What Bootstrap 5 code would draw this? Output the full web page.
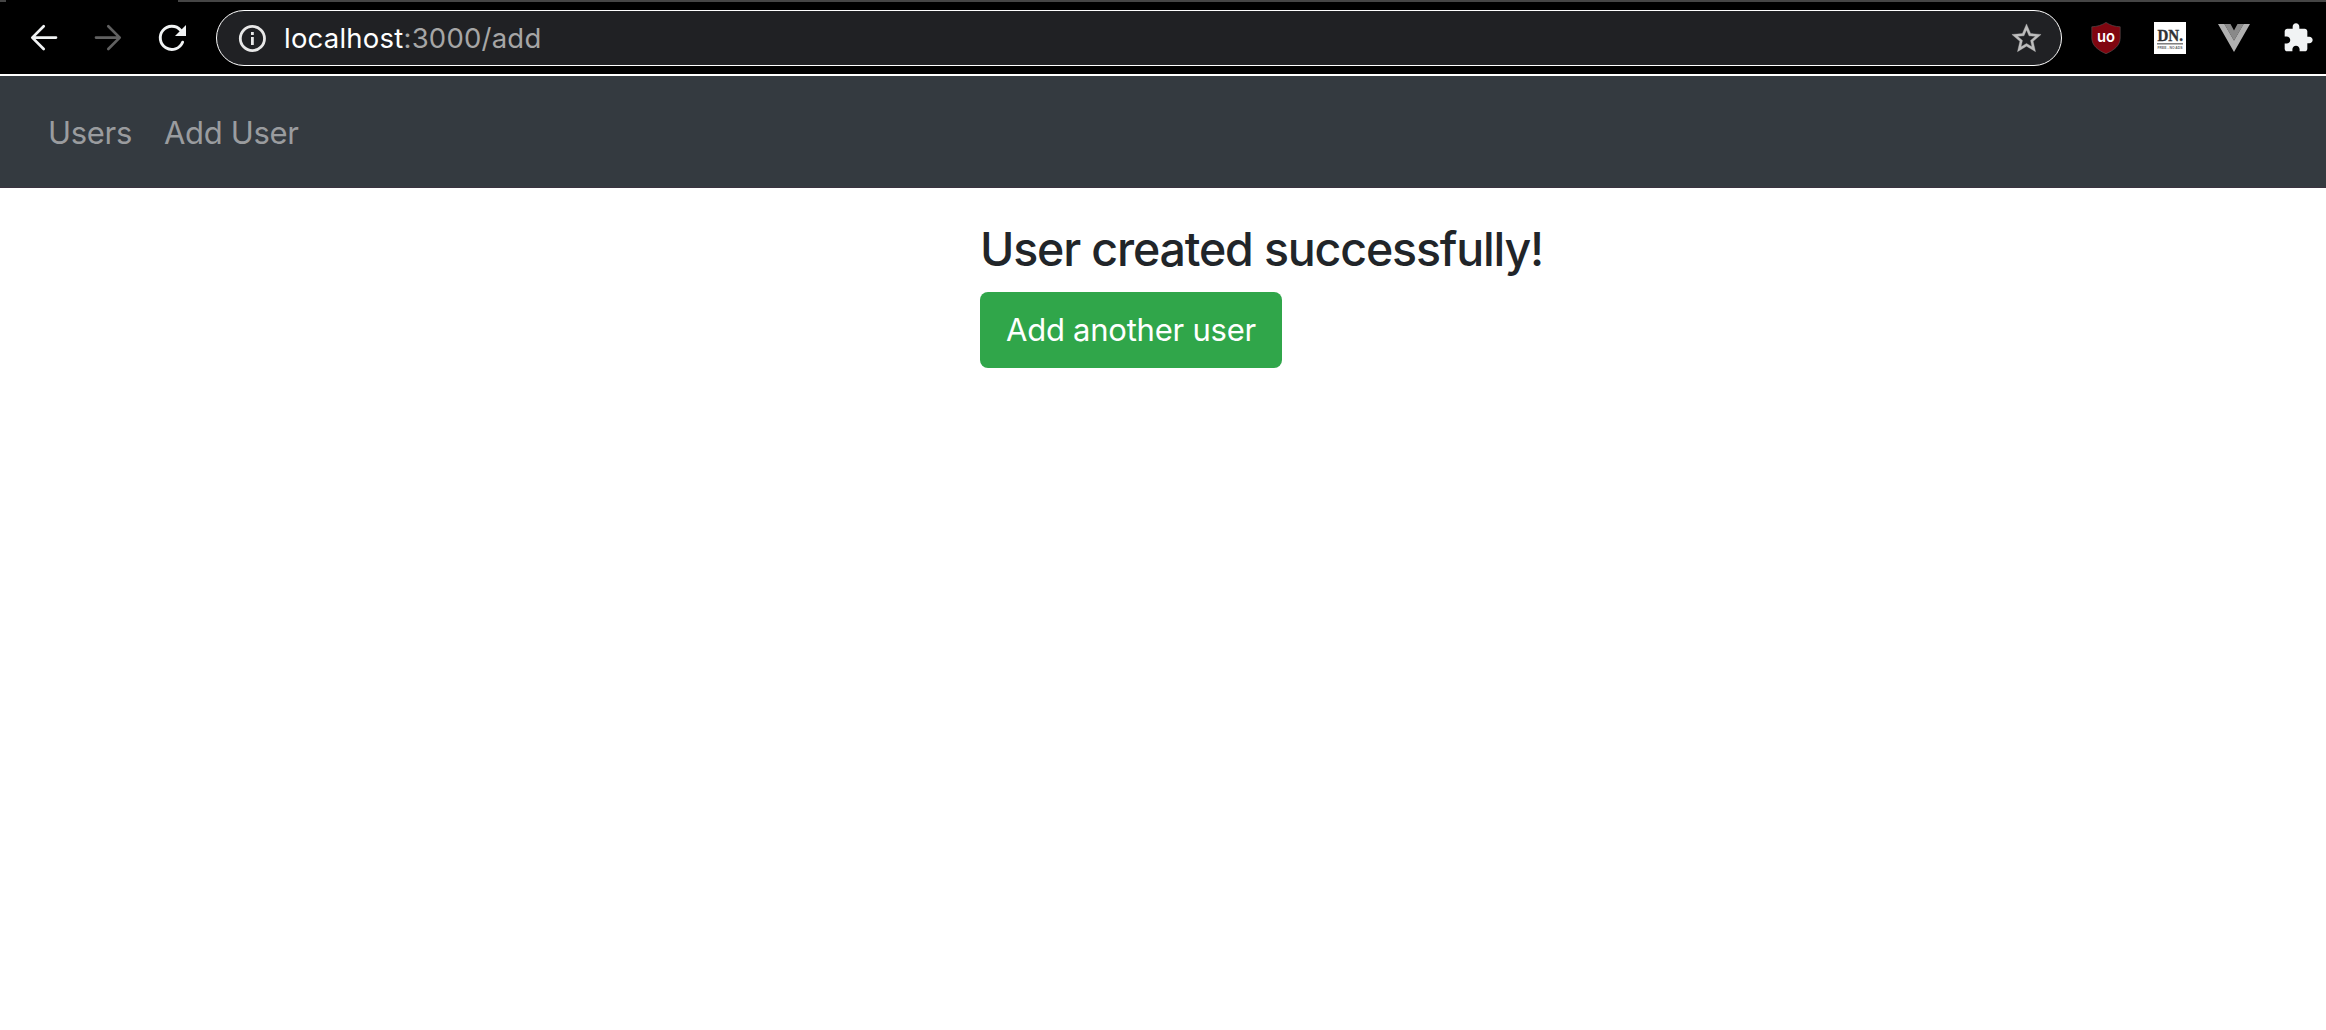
<!DOCTYPE html>
<html lang="en">
<head>
<meta charset="utf-8">
<title>Users</title>
<link href="https://cdn.jsdelivr.net/npm/bootstrap@5.3.0/dist/css/bootstrap.min.css" rel="stylesheet">
<style>
  body { font-family: Inter, "Liberation Sans", sans-serif; color: #212529; background: #fff; }
  .tabstrip { height: 2px; background: #454545; }
  .active-tab { width: 172px; height: 2px; margin-left: 6px; background: #000; }
  .toolbar { height: 72px; padding: 0 12px 0 28px; gap: 28px; background: #000; }
  .tools { gap: 32px; }
  .tools svg { width: 32px; height: 32px; display: block; overflow: visible; }
  .omnibox { height: 56px; border: 1px solid #fff; border-radius: 28px; background: #202124; padding: 0 17px 0 19px; }
  .address { font-size: 27.5px; line-height: 54px; letter-spacing: .22px; color: #a6a6a6; margin-left: 16px; white-space: nowrap; }
  .address .host { color: #fff; }
  .separator { height: 2px; background: #fff; }
  .app-nav { height: 112px; padding: 2px 32px 0; background: #343a40; border-bottom: 1px solid #3b3340; }
  .app-nav .navbar-nav .nav-link { font-size: 31px; line-height: 48px; letter-spacing: -.32px; padding: 0 16px; color: #9a9c9f; white-space: nowrap; }
  .message { padding: 32px 0 0 980px; }
  .message h4 { font-size: 46.5px; line-height: 58px; font-weight: 500; letter-spacing: -1.17px; margin: 0 0 14px; white-space: nowrap; }
  .btn-again { height: 76px; padding: 0 26px; font-size: 31px; line-height: 76px; letter-spacing: -.24px; border: 0; border-radius: 8px; background: #30a64a; color: #fff; white-space: nowrap; }
</style>
<script src="https://cdn.jsdelivr.net/npm/bootstrap@5.3.0/dist/js/bootstrap.bundle.min.js"></script>
</head>
<body>
<header>
  <div class="tabstrip"><div class="active-tab"></div></div>
  <div class="toolbar d-flex align-items-center">
    <div class="tools d-flex">
      <svg viewBox="0 0 32 32" fill="none" stroke="#f1f3f4" stroke-width="2.7" stroke-linecap="round" stroke-linejoin="round"><path d="M28 15.6H4.8M15.7 4.2L4.3 15.6L15.7 27"/></svg>
      <svg viewBox="0 0 32 32" fill="none" stroke="#616161" stroke-width="2.7" stroke-linecap="round" stroke-linejoin="round"><path d="M4 15.6H27.6M16.3 4.2L27.7 15.6L16.3 27"/></svg>
      <svg viewBox="0 0 32 32"><path d="M26.6 20.2A11.6 11.6 0 1 1 24.6 8.2" fill="none" stroke="#f1f3f4" stroke-width="2.9" stroke-linecap="round"/><path d="M30 3V14H19z" fill="#f1f3f4"/></svg>
    </div>
    <div class="omnibox d-flex align-items-center flex-grow-1">
      <svg width="32" height="32" viewBox="0 0 32 32"><circle cx="16.4" cy="16.5" r="12.1" fill="none" stroke="#e8e8e8" stroke-width="2.8"/><path d="M15 10h2.8v2.9H15zM15 15h2.8v8H15z" fill="#e8e8e8"/></svg>
      <div class="address"><span class="host">localhost</span>:3000/add</div>
      <svg class="ms-auto" width="35" height="35" viewBox="0 0 24 24" fill="#bdbdbd" stroke="#bdbdbd" stroke-width=".25"><path d="M22 9.24l-7.19-.62L12 2 9.19 8.63 2 9.24l5.46 4.73L5.82 21 12 17.27 18.18 21l-1.63-7.03L22 9.24zM12 15.4l-3.76 2.27 1-4.28-3.32-2.88 4.38-.38L12 6.1l1.71 4.04 4.38.38-3.32 2.88 1 4.28L12 15.4z"/></svg>
    </div>
    <div class="tools d-flex">
      <svg viewBox="0 0 32 32"><path d="M16 .4C12.2 3 7 4.6 1.8 4.8V16c0 7.500 6.500 12.500 14.200 15.700C23.700 28.500 30.200 23.500 30.200 16V4.800C25 4.600 19.800 3 16 .4z" fill="#800610" stroke="#555" stroke-width=".6"/><text x="6.900" y="19.500" font-family="Inter, sans-serif" font-size="16.500" font-weight="600" textLength="18" lengthAdjust="spacingAndGlyphs" fill="#fff">uo</text></svg>
      <svg viewBox="0 0 32 32"><path d="M0 0h32v32H0z" fill="#fff"/><text x="3.500" y="19" font-family="Liberation Serif, serif" font-size="17.500" font-weight="700" textLength="25.500" lengthAdjust="spacingAndGlyphs" fill="#303234" stroke="#303234" stroke-width=".4">DN.</text><path d="M3 21.800h26" stroke="#737373" stroke-width="1.400"/><text x="3.500" y="27" font-family="Liberation Sans, sans-serif" font-size="4" font-weight="700" textLength="25" lengthAdjust="spacingAndGlyphs" fill="#666">FREE - NO ADS</text></svg>
      <svg viewBox="0 0 32 32"><path d="M0 2h6.500L16 18.500 25.500 2H32L16 30z" fill="#b0b0b0"/><path d="M6.300 2H12.500L16 8.500 19.500 2H25.700L16 18.800z" fill="#898989"/></svg>
      <svg viewBox="0 0 24 24" fill="#f1f3f4"><path d="M20.500 11H19V7c0-1.100-.9-2-2-2h-4V3.500C13 2.120 11.880 1 10.500 1S8 2.120 8 3.500V5H4c-1.100 0-1.990.9-1.990 2v3.800H3.500c1.490 0 2.700 1.210 2.700 2.700s-1.210 2.700-2.700 2.700H2V20c0 1.100.9 2 2 2h3.800v-1.500c0-1.490 1.210-2.700 2.700-2.700 1.490 0 2.700 1.210 2.700 2.700V22H17c1.100 0 2-.9 2-2v-4h1.500c1.380 0 2.500-1.120 2.500-2.500S21.880 11 20.500 11z"/></svg>
    </div>
  </div>
  <div class="separator"></div>
</header>
<nav class="app-nav navbar navbar-expand justify-content-start">
  <div class="navbar-nav">
    <a class="nav-link" href="#">Users</a>
    <a class="nav-link" href="#">Add User</a>
  </div>
</nav>
<main class="message">
  <h4>User created successfully!</h4>
  <button class="btn btn-success btn-again" type="button">Add another user</button>
</main>
</body>
</html>
